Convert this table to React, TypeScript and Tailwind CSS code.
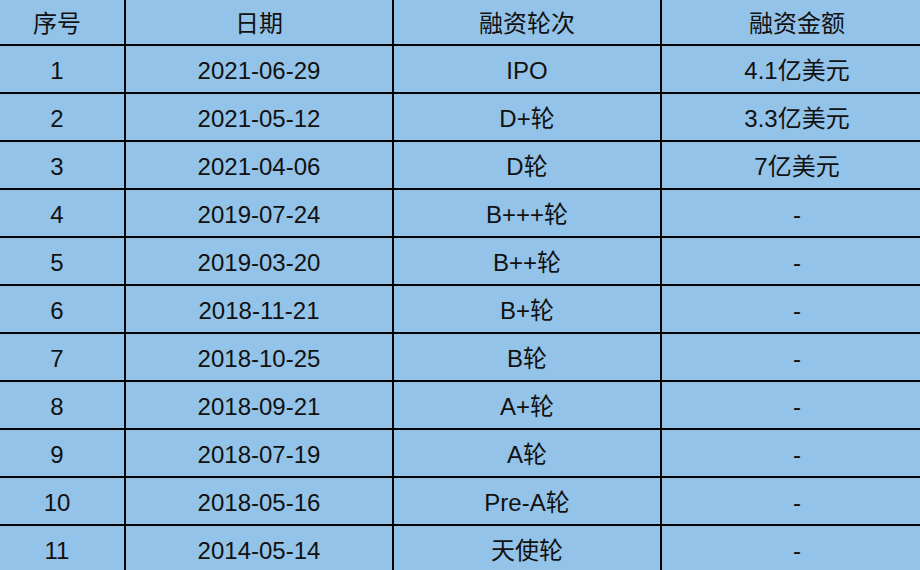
const rows = [
  ["1", "2021-06-29", "IPO", "4.1亿美元"],
  ["2", "2021-05-12", "D+轮", "3.3亿美元"],
  ["3", "2021-04-06", "D轮", "7亿美元"],
  ["4", "2019-07-24", "B+++轮", "-"],
  ["5", "2019-03-20", "B++轮", "-"],
  ["6", "2018-11-21", "B+轮", "-"],
  ["7", "2018-10-25", "B轮", "-"],
  ["8", "2018-09-21", "A+轮", "-"],
  ["9", "2018-07-19", "A轮", "-"],
  ["10", "2018-05-16", "Pre-A轮", "-"],
  ["11", "2014-05-14", "天使轮", "-"],
];

const headers = ["序号", "日期", "融资轮次", "融资金额"];

export default function App() {
  return (
    <div
      className="w-[920px] h-[570px] overflow-hidden bg-[#94c3e9] text-[24px] text-[#111]"
      style={{ fontFamily: '"Liberation Sans", "Noto Sans CJK SC", sans-serif' }}
    >
      <div className="-ml-[10px] grid grid-cols-[134px_266px_266px_270px] gap-[2px] bg-black">
        {headers.map((h) => (
          <div key={h} className="h-[44px] pt-[3px] bg-[#94c3e9] flex items-center justify-center">
            {h}
          </div>
        ))}
        {rows.map((r) =>
          r.map((cell, i) => (
            <div
              key={r[0] + "-" + i}
              className="h-[46px] pt-[3px] bg-[#94c3e9] flex items-center justify-center"
            >
              {cell}
            </div>
          ))
        )}
      </div>
    </div>
  );
}
